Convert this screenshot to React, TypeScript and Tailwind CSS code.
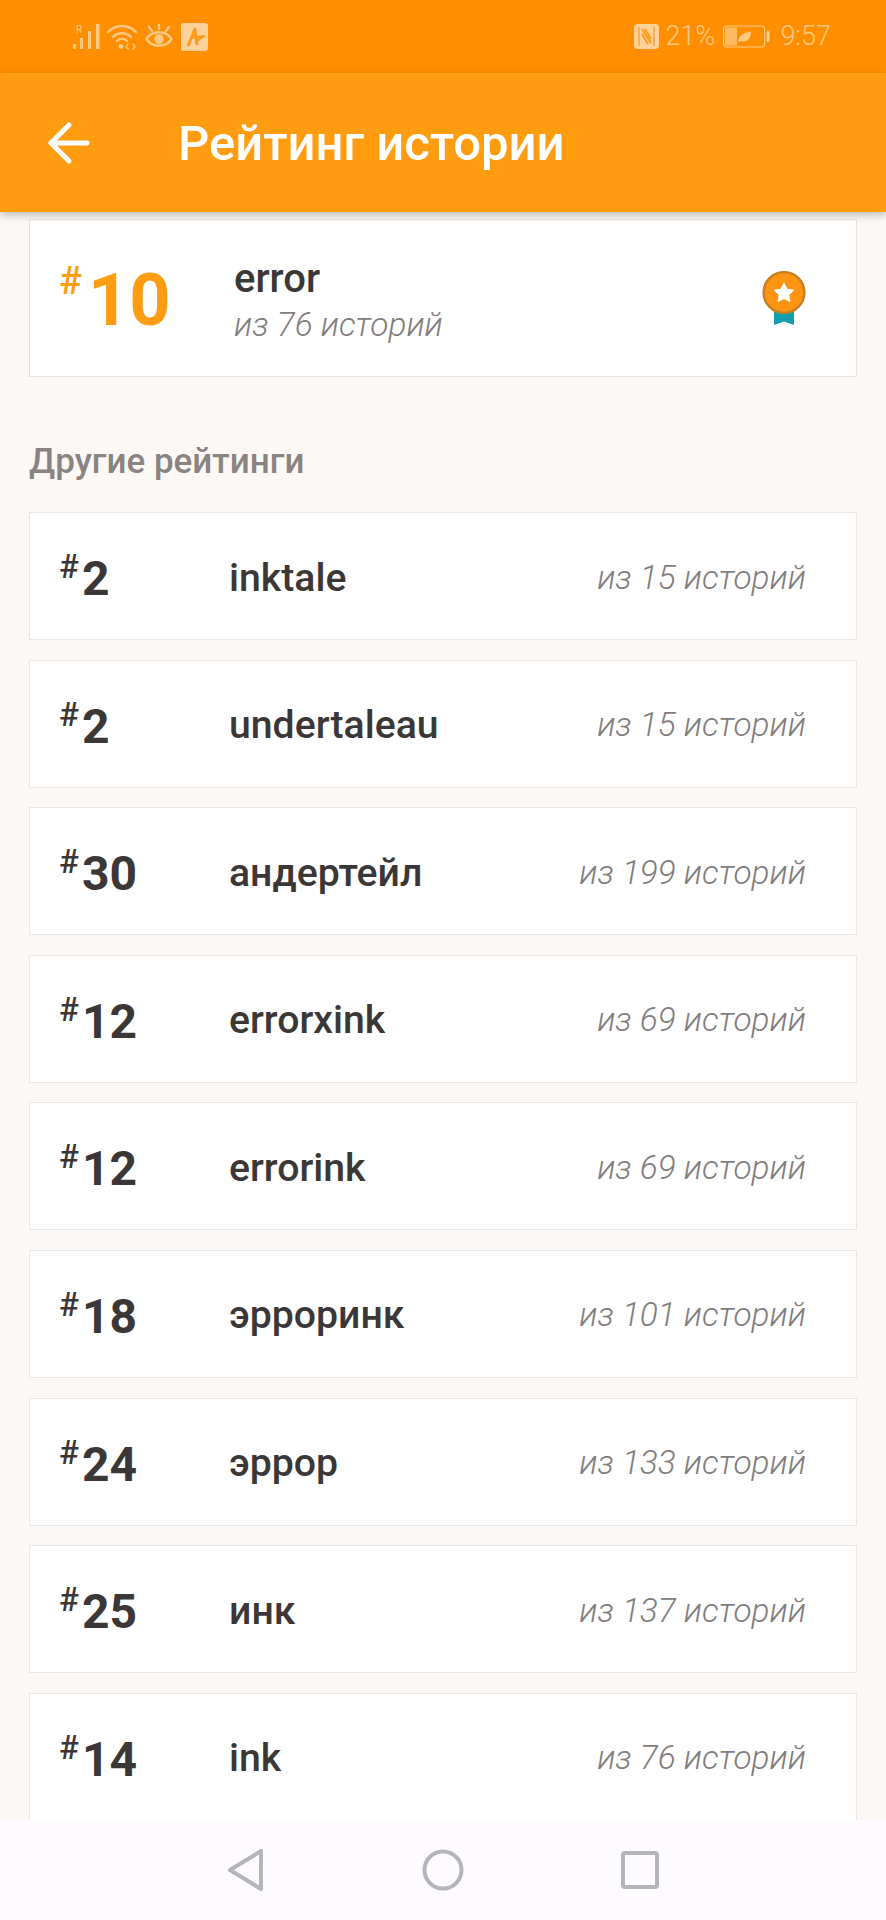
import { ArrowLeft } from 'lucide-react'

interface RatingItem {
  rank: number
  tag: string
  total: number
}

const RATINGS: RatingItem[] = [
  { rank: 2, tag: 'inktale', total: 15 },
  { rank: 2, tag: 'undertaleau', total: 15 },
  { rank: 30, tag: 'андертейл', total: 199 },
  { rank: 12, tag: 'errorxink', total: 69 },
  { rank: 12, tag: 'errorink', total: 69 },
  { rank: 18, tag: 'эрроринк', total: 101 },
  { rank: 24, tag: 'эррор', total: 133 },
  { rank: 25, tag: 'инк', total: 137 },
  { rank: 14, tag: 'ink', total: 76 },
]

function StatusLeft() {
  return (
    <div className="flex items-center text-[#ffc982]">
      {/* signal */}
      <svg width="27" height="26" viewBox="0 0 27 26" fill="currentColor">
        <rect x="0" y="20" width="3" height="5" />
        <rect x="7" y="14" width="3" height="11" />
        <rect x="15" y="7" width="3" height="18" />
        <rect x="23" y="0" width="3.5" height="25" />
        <text x="3" y="9" fontSize="10" fontFamily="Roboto">R</text>
      </svg>
      {/* wifi */}
      <svg width="30" height="26" viewBox="0 0 30 26" fill="none" stroke="currentColor" strokeWidth="2.4" strokeLinecap="round" className="ml-[7px]">
        <path d="M1 8C9 0 21 0 29 8" />
        <path d="M6 13C11 8 19 8 24 13" />
        <path d="M10 17C13 14 17 14 20 17" />
        <circle cx="14" cy="22.5" r="2.4" fill="currentColor" stroke="none" />
        <path d="M21 20l-2 2.5 2 2.5M26 20l2 2.5-2 2.5" strokeWidth="1.4" />
      </svg>
      {/* eye comfort */}
      <svg width="28" height="26" viewBox="0 0 28 26" fill="none" stroke="currentColor" strokeWidth="2.4" strokeLinecap="round" className="ml-[8px]">
        <path d="M1.5 15C7 6 21 6 26.5 15C21 24 7 24 1.5 15Z" />
        <circle cx="14" cy="15" r="4.8" fill="currentColor" stroke="none" />
        <path d="M14 1v4M4 3l3 4M24 3l-3 4" />
      </svg>
      {/* app badge */}
      <div className="ml-[8px] flex h-[28px] w-[27px] items-center justify-center rounded-[3px] bg-[#ffd19a]">
        <svg width="20" height="20" viewBox="0 0 20 20" fill="none" stroke="#ff9a1a" strokeWidth="2.8" strokeLinejoin="round">
          <path d="M3 19L10 2L12 18" />
          <path d="M5 11L19 9L10 15" strokeWidth="2.2" />
        </svg>
      </div>
    </div>
  )
}

function StatusRight() {
  return (
    <div className="flex items-center text-[#ffc982]">
      {/* nfc */}
      <svg width="25" height="25" viewBox="0 0 25 25">
        <rect width="25" height="25" rx="4" fill="#ffd19a" />
        <path d="M5 3V22M20 3V22" stroke="#ff9a1a" strokeWidth="1.2" />
        <path d="M8 5L17 19M8 10L14 20M17 15L11 5" fill="none" stroke="#ff9a1a" strokeWidth="2" />
      </svg>
      <span className="ml-[6px] w-[52px] text-[27px] leading-none font-light">21%</span>
      {/* battery */}
      <svg width="47" height="24" viewBox="0 0 47 24" className="ml-[6px]">
        <rect x="0.6" y="1" width="41" height="21" rx="3" fill="none" stroke="currentColor" strokeWidth="1.2" />
        <rect x="2" y="2.5" width="12" height="18" rx="1.5" fill="#ffc982" opacity="0.75" />
        <path d="M15 17C16 9 23 7 28 7C28 13 24 18 18 16Z" fill="currentColor" />
        <rect x="43.5" y="6" width="3" height="11" rx="1.5" fill="currentColor" />
      </svg>
      <span className="ml-[10px] text-[27px] leading-none font-light">9:57</span>
    </div>
  )
}

function Medal() {
  return (
    <svg width="44" height="54" viewBox="0 0 44 54">
      <path d="M12 34H32V54L22 50.5L12 54Z" fill="#109fb0" />
      <circle cx="22" cy="21.5" r="20.4" fill="#ff9412" stroke="#c97f1f" strokeWidth="2.4" />
      <path d="M22 11L25.3 17.8L32.5 18.8L27.3 24L28.5 31.3L22 27.9L15.5 31.3L16.7 24L11.5 18.8L18.7 17.8Z" fill="#fff" />
    </svg>
  )
}

function RatingRow({ item }: { item: RatingItem }) {
  return (
    <div className="flex h-[128px] shrink-0 items-center border border-[#ebe7e3] bg-white pr-[50px] pl-[29px]">
      <div className="flex w-[170px] shrink-0 items-start text-[#3b3736]">
        <span className="mt-[1px] w-[22px] text-[33px] leading-[34px] font-medium">#</span>
        <span className="mt-[6px] ml-[1px] text-[48px] leading-[48px] font-bold">{item.rank}</span>
      </div>
      <span className="flex-1 pt-[3px] text-[39.2px] leading-[48px] font-medium text-[#3b3736]">{item.tag}</span>
      <span className="pt-[3px] text-[33.4px] leading-[40px] font-light text-[#827d7d] italic">из {item.total} историй</span>
    </div>
  )
}

export default function App() {
  return (
    <div className="flex h-[1920px] w-[886px] flex-col overflow-hidden bg-[#fbf8f5] font-['Roboto',sans-serif]">
      <div className="flex h-[73px] shrink-0 items-center justify-between bg-[#ff8f00] pr-[55px] pl-[73px]">
        <StatusLeft />
        <StatusRight />
      </div>

      <header className="relative z-10 flex h-[139px] shrink-0 items-center bg-[#ff9c0f] pl-[38px] shadow-[0_3px_8px_rgba(0,0,0,0.25)]">
        <ArrowLeft size={62} strokeWidth={1.9} className="text-white" />
        <h1 className="ml-[78px] pt-[2px] text-[49px] leading-none font-medium text-white">Рейтинг истории</h1>
      </header>

      <main className="min-h-0 flex-1 overflow-hidden px-[29px] pt-[7px]">
        <div className="flex h-[158px] items-center border border-[#e6e2df] bg-white pr-[50px] pl-[29px]">
          <div className="flex w-[175px] shrink-0 items-start text-[#ff9c12]">
            <span className="mt-[2px] text-[38px] leading-[44px] font-medium">#</span>
            <span className="mt-[6px] ml-[6px] text-[72px] leading-[76px] font-bold">10</span>
          </div>
          <div className="flex-1 pt-[7px]">
            <div className="text-[40px] leading-[46px] font-medium text-[#3b3736]">error</div>
            <div className="text-[33.4px] leading-[46px] font-light text-[#827d7d] italic">из 76 историй</div>
          </div>
          <Medal />
        </div>

        <h2 className="mt-[65px] mb-[30px] text-[35px] leading-[40px] font-medium text-[#8a8381]">Другие рейтинги</h2>

        <div className="flex flex-col gap-[19.6px]">
          {RATINGS.map((item) => (
            <RatingRow key={item.tag} item={item} />
          ))}
        </div>
      </main>

      <nav className="relative z-10 flex h-[100px] shrink-0 items-center justify-center gap-[157px] bg-[#fdfbfe] text-[#b5b4b6]">
        <svg width="38" height="42" viewBox="0 0 38 42" fill="none" stroke="currentColor" strokeWidth="4" strokeLinejoin="round">
          <path d="M34 2V40L3 21Z" />
        </svg>
        <svg width="42" height="42" viewBox="0 0 42 42" fill="none" stroke="currentColor" strokeWidth="4">
          <circle cx="21" cy="21" r="18.5" />
        </svg>
        <svg width="38" height="38" viewBox="0 0 38 38" fill="none" stroke="currentColor" strokeWidth="4" strokeLinejoin="round">
          <rect x="2" y="2" width="34" height="34" rx="2" />
        </svg>
      </nav>
    </div>
  )
}
